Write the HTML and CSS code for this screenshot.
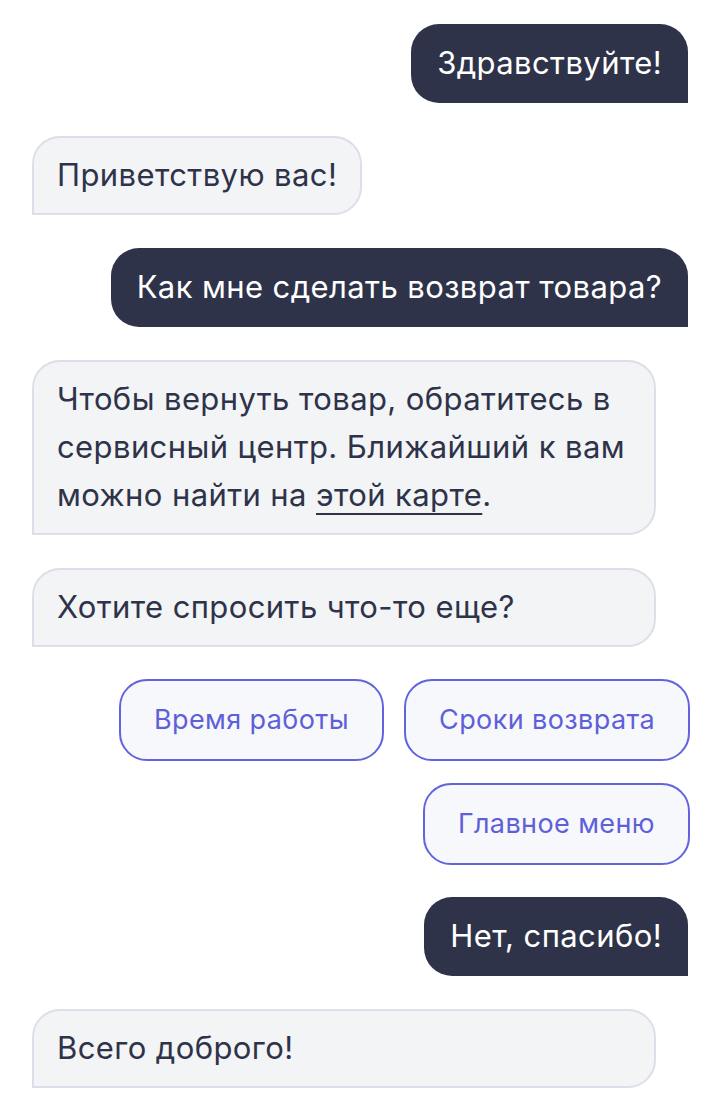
FILE: index.html
```html
<!DOCTYPE html>
<html lang="ru">
<head>
<meta charset="utf-8">
<title>Чат</title>
<link rel="stylesheet" href="styles.css">
</head>
<body>
<main class="chat">
  <div class="msg user">Здравствуйте!</div>
  <div class="msg bot">Приветствую вас!</div>
  <div class="msg user">Как мне сделать возврат товара?</div>
  <div class="msg bot wide">Чтобы вернуть товар, обратитесь в сервисный центр. Ближайший к вам можно найти на <a class="link" href="#">этой карте</a>.</div>
  <div class="msg bot wide">Хотите спросить что-то еще?</div>
  <div class="replies">
    <button class="reply">Время работы</button>
    <button class="reply">Сроки возврата</button>
    <button class="reply">Главное меню</button>
  </div>
  <div class="msg user">Нет, спасибо!</div>
  <div class="msg bot wide">Всего доброго!</div>
</main>
</body>
</html>
```

FILE: styles.css
```css
* { box-sizing: border-box; }
html, body { margin: 0; background: #ffffff; }
body {
  font-family: Inter, "Noto Sans", sans-serif;
  color: #2e3349;
}
.chat {
  display: flex;
  flex-direction: column;
  gap: 33px;
  padding: 24px 32px 20px;
}
.msg {
  font-size: 31px;
  letter-spacing: 0.4px;
  line-height: 48px;
  padding: 15px 26px 16px;
  max-width: 624px;
}
.user {
  align-self: flex-end;
  background: #2e3349;
  color: #ffffff;
  border-radius: 28px 28px 0 28px;
}
.bot {
  align-self: flex-start;
  background: #f3f4f5;
  border: 2px solid #dedde9;
  border-radius: 28px 28px 28px 0;
  padding: 13px 23px 14px;
  color: #2e3349;
}
.bot.wide { width: 624px; }
.link {
  color: inherit;
  text-decoration: underline;
  text-decoration-thickness: 2px;
  text-underline-offset: 7px;
}
.replies {
  display: flex;
  flex-wrap: wrap;
  justify-content: flex-end;
  column-gap: 20px;
  row-gap: 22px;
  margin: -1px -2px -1px 0;
}
.reply {
  font-family: Inter, "Noto Sans", sans-serif;
  font-size: 27px;
  letter-spacing: 0.4px;
  line-height: 36px;
  color: #5f5fd9;
  background: #f7f8fb;
  border: 2px solid #6463de;
  border-radius: 28px;
  padding: 21px 33px;
  cursor: pointer;
}
```
